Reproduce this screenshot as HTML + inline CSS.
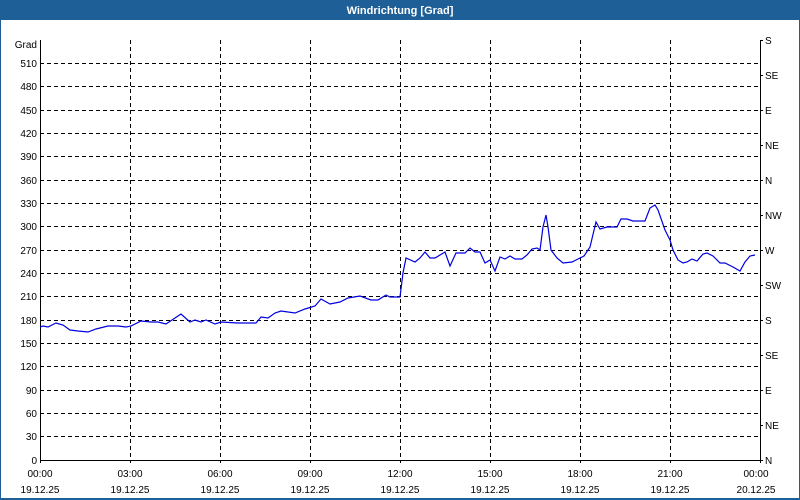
<!DOCTYPE html>
<html><head><meta charset="utf-8"><style>
html,body{margin:0;padding:0;width:800px;height:500px;overflow:hidden;background:#fff;font-family:"Liberation Sans",sans-serif}
</style></head><body>
<svg width="800" height="500" xmlns="http://www.w3.org/2000/svg" style="display:block">
<rect x="0" y="0" width="800" height="500" fill="#1d5f96"/>
<rect x="1" y="20" width="798" height="478" fill="#fff"/>
<text x="400" y="14" fill="#fff" font-size="11" font-weight="bold" text-anchor="middle" font-family="Liberation Sans,sans-serif">Windrichtung [Grad]</text>
<g stroke="#000" stroke-width="1" stroke-dasharray="4,3" fill="none" shape-rendering="crispEdges">
<path d="M40 63.5H760M40 86.5H760M40 110.5H760M40 133.5H760M40 156.5H760M40 180.5H760M40 203.5H760M40 226.5H760M40 250.5H760M40 273.5H760M40 296.5H760M40 320.5H760M40 343.5H760M40 366.5H760M40 390.5H760M40 413.5H760M40 436.5H760"/>
<path d="M130.5 40V460M220.5 40V460M310.5 40V460M400.5 40V460M490.5 40V460M580.5 40V460M670.5 40V460"/>
</g>
<g stroke="#000" stroke-width="1" fill="none" shape-rendering="crispEdges">
<path d="M40.5 40V460.5H760.5V40"/>
<path d="M40.5 460v3M130.5 460v3M220.5 460v3M310.5 460v3M400.5 460v3M490.5 460v3M580.5 460v3M670.5 460v3M760.5 460v3"/>
<path d="M760 40.5h3M760 75.5h3M760 110.5h3M760 145.5h3M760 180.5h3M760 215.5h3M760 250.5h3M760 285.5h3M760 320.5h3M760 355.5h3M760 390.5h3M760 425.5h3M760 460.5h3"/>
</g>
<g font-size="10" fill="#000" text-anchor="end" font-family="Liberation Sans,sans-serif">
<text x="37" y="48">Grad</text>
<text x="37" y="67">510</text><text x="37" y="90">480</text><text x="37" y="114">450</text><text x="37" y="137">420</text><text x="37" y="160">390</text><text x="37" y="184">360</text><text x="37" y="207">330</text><text x="37" y="230">300</text><text x="37" y="254">270</text><text x="37" y="277">240</text><text x="37" y="300">210</text><text x="37" y="324">180</text><text x="37" y="347">150</text><text x="37" y="370">120</text><text x="37" y="394">90</text><text x="37" y="417">60</text><text x="37" y="440">30</text><text x="37" y="464">0</text>
</g>
<g font-size="10" fill="#000" font-family="Liberation Sans,sans-serif">
<text x="765" y="44">S</text><text x="765" y="79">SE</text><text x="765" y="114">E</text><text x="765" y="149">NE</text><text x="765" y="184">N</text><text x="765" y="219">NW</text><text x="765" y="254">W</text><text x="765" y="289">SW</text><text x="765" y="324">S</text><text x="765" y="359">SE</text><text x="765" y="394">E</text><text x="765" y="429">NE</text><text x="765" y="464">N</text>
</g>
<g font-size="10" fill="#000" text-anchor="middle" font-family="Liberation Sans,sans-serif">
<text x="40" y="477">00:00</text><text x="130" y="477">03:00</text><text x="220" y="477">06:00</text><text x="310" y="477">09:00</text><text x="400" y="477">12:00</text><text x="490" y="477">15:00</text><text x="580" y="477">18:00</text><text x="670" y="477">21:00</text><text x="756" y="477">00:00</text>
<text x="40" y="493">19.12.25</text><text x="130" y="493">19.12.25</text><text x="220" y="493">19.12.25</text><text x="310" y="493">19.12.25</text><text x="400" y="493">19.12.25</text><text x="490" y="493">19.12.25</text><text x="580" y="493">19.12.25</text><text x="670" y="493">19.12.25</text><text x="756" y="493">20.12.25</text>
</g>
<polyline fill="none" stroke="#0000e0" stroke-width="1.2" points="40,327 43,326 48,327 56,323 63,325 70,330 78,331 88,332 96,329 108,326 118,326 126,327 131,326 141,321 151,322 158,322 166,324 175,318 181,314 190,322 195,320 201,322 206,320 215,324 221,322 238,323 246,323 256,323 261,317 268,318 275,313 281,311 295,313 305,309 315,306 321,299 330,304 340,302 348,298 360,296 371,300 378,300 386,295 390,297 400,297 403,273 406,258 415,262 420,258 425,252 430,258 435,258 445,252 450,266 456,253 465,253 470,248 475,252 480,252 485,263 490,260 495,271 500,257 505,259 510,256 515,259 522,259 527,255 532,249 537,248 540,250 543,227 546,215 548,227 551,250 557,258 563,263 572,262 578,259 584,256 590,247 596,222 600,229 607,227 617,227 621,219 627,219 633,221 638,221 645,221 650,208 655,205 658,210 665,230 670,240 673,250 678,260 683,263 687,262 692,259 697,261 703,254 707,253 713,256 720,263 725,263 733,267 740,271 745,262 750,256 755,255"/>
</svg>
</body></html>
